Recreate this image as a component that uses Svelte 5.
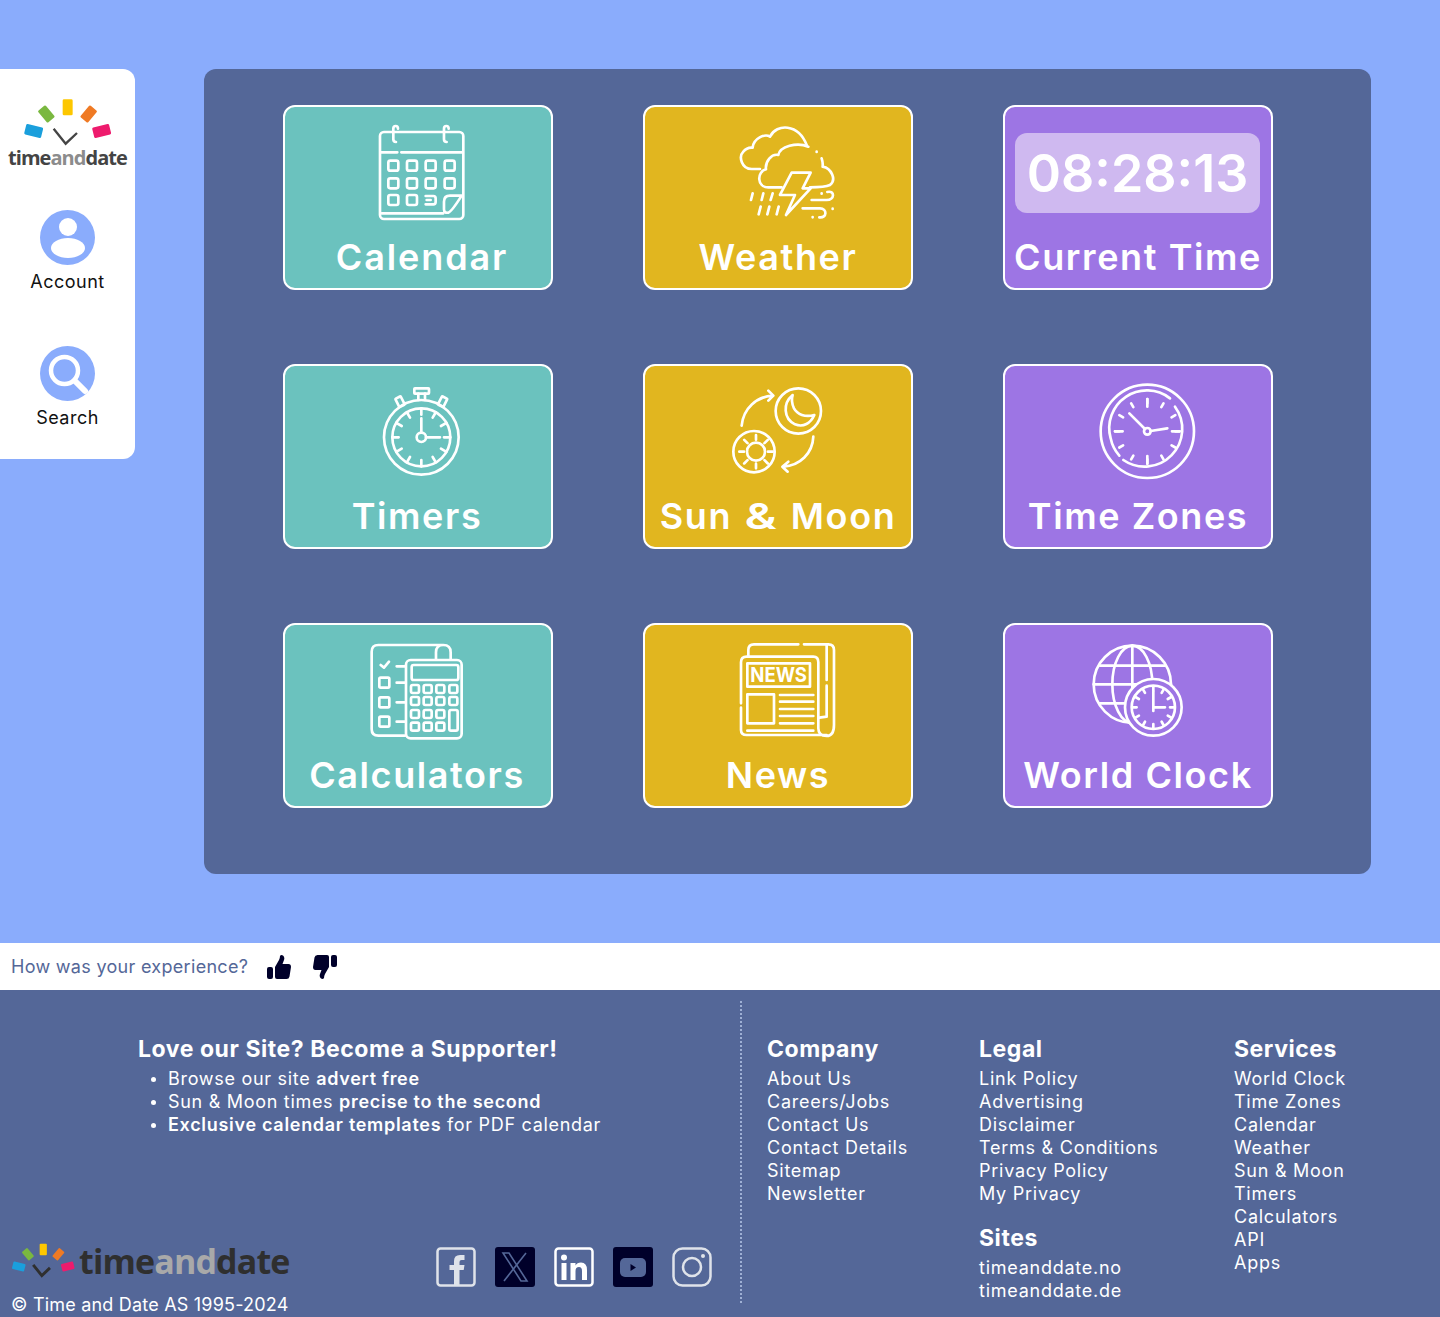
<script>
  const company = ["About Us", "Careers/Jobs", "Contact Us", "Contact Details", "Sitemap", "Newsletter"];
  const legal = ["Link Policy", "Advertising", "Disclaimer", "Terms & Conditions", "Privacy Policy", "My Privacy"];
  const sites = ["timeanddate.no", "timeanddate.de"];
  const services = ["World Clock", "Time Zones", "Calendar", "Weather", "Sun & Moon", "Timers", "Calculators", "API", "Apps"];

  // radial clock marks, returned as path data
  function ticks(cx, cy, r1, r2, n = 12) {
    let d = "";
    for (let i = 0; i < n; i++) {
      const a = (i * 2 * Math.PI) / n;
      const s = Math.sin(a), c = Math.cos(a);
      d += `M${(cx + r1 * s).toFixed(1)},${(cy - r1 * c).toFixed(1)}L${(cx + r2 * s).toFixed(1)},${(cy - r2 * c).toFixed(1)}`;
    }
    return d;
  }

  const calX = [340, 396, 452, 509];
  const calY = [197, 250];
  const keyX = [165, 203, 241, 280];
</script>

{#snippet logoMarks()}
  <rect x="189" y="117" width="30" height="48" rx="4" fill="#fdc700" />
  <rect x="125" y="138" width="30" height="46" rx="4" fill="#7ab840" transform="rotate(-40 140 161)" />
  <rect x="252" y="138" width="30" height="46" rx="4" fill="#ef7a24" transform="rotate(40 267 161)" />
  <rect x="76" y="196" width="52" height="32" rx="4" fill="#1a9fdc" transform="rotate(14 102 212)" />
  <rect x="280" y="196" width="52" height="32" rx="4" fill="#ee1b6d" transform="rotate(-14 306 212)" />
{/snippet}

{#snippet thumb()}
  <path d="M0,14 Q0,12 2,12 H4 Q6,12 6,14 V22 Q6,24 4,24 H2 Q0,24 0,22 Z M8,12 L12,5 Q13,3 13,1 Q14,-.5 16,.5 Q18,2 17,5 L15.5,9 H21.5 Q24,9 24,12 L22.5,21.5 Q22,24 19.5,24 H10 Q8,24 8,22 Z" />
{/snippet}

<div class="hero">
  <aside class="side">
    <div class="side-logo">
      <svg viewBox="70 110 270 150" width="90" height="50">
        {@render logoMarks()}
        <path d="M162,205 L198,250 L232,218" fill="none" stroke="#444" stroke-width="7" />
      </svg>
      <div class="wordmark">time<span>and</span>date</div>
    </div>
    <div class="side-item account">
      <svg viewBox="0 0 55 55" width="55" height="55">
        <circle cx="27.5" cy="27.5" r="27.5" fill="#8aacfc" />
        <circle cx="28" cy="17" r="9" fill="#fff" />
        <ellipse cx="28" cy="38" rx="17" ry="10" fill="#fff" />
      </svg>
      <span>Account</span>
    </div>
    <div class="side-item">
      <svg viewBox="0 0 55 55" width="55" height="55">
        <circle cx="27.5" cy="27.5" r="27.5" fill="#8aacfc" />
        <circle cx="24.5" cy="24.5" r="13.5" fill="none" stroke="#fff" stroke-width="4.5" />
        <path d="M35,35 L45,45" stroke="#fff" stroke-width="6" stroke-linecap="round" />
      </svg>
      <span>Search</span>
    </div>
  </aside>

  <main class="panel">
    <div class="card teal">
      <svg class="ico" viewBox="2 2 266 120">
        <g transform="translate(-3,-5) scale(.3333)">
          <rect x="300" y="96" width="250" height="261" rx="12" />
          <path d="M302,157 H352 M364,157 H548 M305,340 H490 M340,92 V86 Q340,78 347,78 Q354,78 354,86 M340,92 V118 Q340,126 348,126 M492,92 V86 Q492,78 499,78 Q506,78 506,86 M492,92 V118 Q492,126 500,126" />
          {#each calY as y}
            {#each calX as x}
              <rect x={x - 15} y={y - 15} width="30" height="30" rx="6" />
            {/each}
          {/each}
          <rect x="325" y="285" width="30" height="30" rx="6" />
          <rect x="381" y="285" width="30" height="30" rx="6" />
          <path d="M437,288 H460 Q467,288 467,295 V306 Q467,313 460,313 H437 M440,300 H452" />
          <path d="M545,287 H510 Q492,287 492,305 V328 Q492,340 505,338 Q515,335 545,287 Z" />
        </g>
      </svg>
      <div class="label shift">Calendar</div>
    </div>

    <div class="card gold">
      <svg class="ico" viewBox="2 2 266 120">
        <g transform="translate(-3,-5) scale(.3333)">
          <path d="M360,207 H335 C305,207 295,170 310,155 C318,145 330,142 338,143 C340,115 375,100 390,110 C410,70 475,70 500,135" />
          <path d="M505,140 C470,125 420,140 415,165 C395,160 375,185 378,208 C350,215 350,262 385,262 H425 M545,175 C550,190 548,195 548,200 C575,205 590,240 570,255 Q555,262 510,262" />
          <path d="M455,218 H512 L488,265 H512 L438,345 L465,285 H420 Z" />
          <path d="M338,280 L333,300 M370,280 L365,300 M398,280 L392,300 M362,320 L356,343 M388,320 L382,343 M416,320 L410,343" />
          <path d="M515,300 H560 C585,300 585,270 562,276 M488,325 H540 C562,325 562,355 538,352 M530,155 V156 M578,326 V327 M518,351 V352 M545,280 V281" />
        </g>
      </svg>
      <div class="label">Weather</div>
    </div>

    <div class="card purple">
      <div class="time">08:28:13</div>
      <div class="label">Current Time</div>
    </div>

    <div class="card teal">
      <svg class="ico" viewBox="2 2 266 120">
        <g transform="translate(77,11) scale(.3333)">
          <circle cx="184" cy="187" r="112" />
          <circle cx="184" cy="187" r="87" />
          <circle cx="184" cy="187" r="14" />
          <path d="M184,130 V172 M198,187 H240" />
          <path d={ticks(184, 187, 87, 68)} />
          <rect x="163" y="40" width="44" height="16" rx="2" />
          <path d="M175,56 V75 M195,56 V75" />
          <rect x="111" y="66" width="18" height="28" rx="2" transform="rotate(-27 120 80)" />
          <rect x="239" y="66" width="18" height="28" rx="2" transform="rotate(27 248 80)" />
        </g>
      </svg>
      <div class="label left">Timers</div>
    </div>

    <div class="card gold">
      <svg class="ico" viewBox="2 2 266 120">
        <g transform="translate(77,11) scale(.3333)">
          <circle cx="235" cy="108" r="68" />
          <path d="M218,60 C188,85 190,130 225,148 C250,158 272,145 283,120 C255,128 232,118 222,100 C215,85 214,72 218,60 Z" />
          <circle cx="102" cy="230" r="62" />
          <circle cx="108" cy="230" r="27" />
          <path d={ticks(108, 230, 36, 50, 8)} />
          <path d="M65,152 C70,100 110,65 158,62 M145,47 L160,62 L145,77" />
          <path d="M280,185 C278,235 240,272 190,275 M205,260 L187,275 L203,290" />
        </g>
      </svg>
      <div class="label">Sun <span class="and">&amp;</span> Moon</div>
    </div>

    <div class="card purple">
      <svg class="ico" viewBox="2 2 266 120">
        <g transform="translate(87,11) scale(.3333)">
          <circle cx="172" cy="169" r="140" />
          <path d="M240,70 A113,113 0 0 0 62,190 Q68,220 88,242 M100,255 A113,113 0 0 0 255,95" />
          <circle cx="172" cy="169" r="10" />
          <path d="M118,115 L165,162 M182,168 L232,160" />
          <path d={ticks(172, 169, 97, 84)} />
          <path d="M172,72 V95 M172,243 V266 M75,169 H98 M246,169 H269" />
        </g>
      </svg>
      <div class="label">Time Zones</div>
    </div>

    <div class="card teal">
      <svg class="ico" viewBox="2 2 266 120">
        <g transform="translate(77,12) scale(.3333)">
          <path d="M135,302 H55 Q35,302 35,282 V50 Q35,30 55,30 H250 Q272,30 272,52 V72 M228,72 V52 Q228,30 250,30" />
          <path d="M62,90 L72,98 L87,80 M110,94 H135 M110,143 H135 M110,202 H135 M110,260 H135" />
          <rect x="58" y="128" width="30" height="30" rx="4" />
          <rect x="58" y="187" width="30" height="30" rx="4" />
          <rect x="58" y="245" width="30" height="30" rx="4" />
          <rect x="138" y="75" width="167" height="235" rx="14" />
          <rect x="155" y="90" width="140" height="45" rx="6" />
          {#each keyX as x}
            <rect x={x - 12} y="150" width="24" height="24" rx="5" />
            <rect x={x - 12} y="186" width="24" height="24" rx="5" />
          {/each}
          {#each keyX.slice(0, 3) as x}
            <rect x={x - 12} y="225" width="24" height="24" rx="5" />
            <rect x={x - 12} y="263" width="24" height="24" rx="5" />
          {/each}
          <rect x="268" y="225" width="25" height="62" rx="5" />
        </g>
      </svg>
      <div class="label left">Calculators</div>
    </div>

    <div class="card gold">
      <svg class="ico" viewBox="2 2 266 120">
        <g transform="translate(87,12) scale(.3333)">
          <path d="M33,205 V82 Q33,65 50,65 H250 Q265,65 265,82 V280 Q265,303 290,303 Q312,303 312,270 V45 Q312,28 295,28 H222 M205,28 H72 Q55,28 55,45 V65 M33,218 V285 Q33,300 50,300 H290" />
          <path d="M290,28 Q290,45 290,135 M290,152 V245 L268,248" />
          <rect x="52" y="85" width="188" height="70" />
          <rect x="52" y="178" width="80" height="87" />
          <path d="M150,180 H250 M150,200 H250 M150,222 H250 M150,243 H250 M150,265 H250 M52,287 H250" />
          <text class="news" x="146" y="140" text-anchor="middle" textLength="170" lengthAdjust="spacingAndGlyphs">NEWS</text>
        </g>
      </svg>
      <div class="label">News</div>
    </div>

    <div class="card purple">
      <svg class="ico" viewBox="2 2 266 120">
        <g transform="translate(82,12) scale(.3333)">
          <circle cx="142" cy="148" r="116" />
          <ellipse cx="142" cy="148" rx="60" ry="116" />
          <path d="M142,32 V264 M45,92 H239 M26,148 H258 M45,205 H239" />
          <circle cx="205" cy="217" r="85" class="cover" />
          <circle cx="205" cy="217" r="65" />
          <path d="M205,170 V228 M205,217 H240" />
          <path d={ticks(205, 217, 62, 50)} />
        </g>
      </svg>
      <div class="label">World Clock</div>
    </div>
  </main>
</div>

<div class="feedback">
  <span>How was your experience?</span>
  <svg viewBox="0 0 24 24" width="24" height="24" class="up">{@render thumb()}</svg>
  <svg viewBox="0 0 24 24" width="24" height="24" class="down">{@render thumb()}</svg>
</div>

<footer>
  <div class="foot-left">
    <div class="support">
      <h3>Love our Site? Become a Supporter!</h3>
      <ul>
        <li>Browse our site <b>advert free</b></li>
        <li>Sun &amp; Moon times <b>precise to the second</b></li>
        <li><b>Exclusive calendar templates</b> for PDF calendar</li>
      </ul>
    </div>
    <div class="foot-bottom">
      <div class="brand">
        <div class="brand-logo">
          <svg viewBox="70 110 270 150" width="65" height="36">
            {@render logoMarks()}
            <path d="M162,205 L198,250 L232,218" fill="none" stroke="#2f2f2f" stroke-width="12" />
          </svg>
          <div class="wordmark big">time<span>and</span>date</div>
        </div>
        <div class="copy">© Time and Date AS 1995-2024</div>
      </div>
      <div class="social">
        <svg viewBox="0 0 40 40" width="40" height="40">
          <rect x="1.5" y="1.5" width="37" height="37" rx="3" fill="none" stroke="#dfe3ea" stroke-width="2.5" />
          <path d="M18,38 V23 H13.5 V18 H18 V14 Q18,8 24,8 H28.5 V13 H25.5 Q23.5,13 23.5,15 V18 H28.5 L27.7,23 H23.5 V38 Z" fill="#dfe3ea" />
        </svg>
        <svg viewBox="0 0 40 40" width="40" height="40">
          <rect width="40" height="40" rx="3" fill="#00002a" />
          <path d="M8,6 H14 L32,34 H26 Z M31,6 L9,34" fill="none" stroke="#546798" stroke-width="1.6" />
        </svg>
        <svg viewBox="0 0 40 40" width="40" height="40">
          <rect x="1.5" y="1.5" width="37" height="37" rx="3" fill="none" stroke="#fff" stroke-width="2.5" />
          <circle cx="10" cy="10.5" r="3" fill="#fff" />
          <path d="M7.5,16 H12.5 V33 H7.5 Z M16.5,16 H21.5 V18.5 Q23,15.5 27,15.5 Q33,15.5 33,23 V33 H28 V24 Q28,20 25,20 Q21.5,20 21.5,24 V33 H16.5 Z" fill="#fff" />
        </svg>
        <svg viewBox="0 0 40 40" width="40" height="40">
          <rect width="40" height="40" rx="3" fill="#00002a" />
          <rect x="7" y="11" width="26" height="19" rx="5" fill="#546798" />
          <path d="M17.5,17 L23,20.5 L17.5,24 Z" fill="#00002a" />
        </svg>
        <svg viewBox="0 0 40 40" width="40" height="40">
          <rect x="1.5" y="1.5" width="37" height="37" rx="9" fill="none" stroke="#dfe3ea" stroke-width="2.5" />
          <circle cx="20" cy="20" r="9" fill="none" stroke="#dfe3ea" stroke-width="2.5" />
          <circle cx="31" cy="9" r="2" fill="#dfe3ea" />
        </svg>
      </div>
    </div>
  </div>

  <div class="foot-links">
    <div class="col">
      <h4>Company</h4>
      {#each company as item}<a href="#top">{item}</a>{/each}
    </div>
    <div class="col">
      <h4>Legal</h4>
      {#each legal as item}<a href="#top">{item}</a>{/each}
      <h4 class="sites">Sites</h4>
      {#each sites as item}<a href="#top">{item}</a>{/each}
    </div>
    <div class="col">
      <h4>Services</h4>
      {#each services as item}<a href="#top">{item}</a>{/each}
    </div>
  </div>
</footer>

<style>
  :global(body) {
    font-family: Inter, "Noto Sans", sans-serif;
  }

  .hero {
    display: flex;
    align-items: flex-start;
    height: 943px;
    padding-top: 69px;
    box-sizing: border-box;
    background: #8aacfc;
  }

  .side {
    width: 135px;
    height: 390px;
    flex: none;
    box-sizing: border-box;
    padding-top: 28px;
    display: flex;
    flex-direction: column;
    align-items: center;
    background: #fff;
    border-radius: 0 12px 12px 0;
  }

  .side-logo {
    display: flex;
    flex-direction: column;
    align-items: center;
    height: 113px;
  }

  .side-logo svg {
    display: block;
    margin: 0 0 3px 2px;
  }

  .wordmark {
    font-family: "Open Sans", sans-serif;
    font-size: 20px;
    line-height: 16px;
    font-weight: 700;
    letter-spacing: -0.95px;
    color: #444;
  }

  .wordmark span {
    color: #8c8c8c;
  }

  .wordmark.big {
    font-size: 34px;
    line-height: 36px;
    letter-spacing: -0.85px;
    color: #2f2f2f;
    position: relative;
    top: 1px;
  }

  .wordmark.big span {
    color: #a9a9a9;
  }

  .side-item {
    display: flex;
    flex-direction: column;
    align-items: center;
    gap: 3px;
    font-size: 18px;
    letter-spacing: 0.5px;
    color: #111;
  }

  .side-item span {
    line-height: 27px;
  }

  .side-item.account {
    height: 136px;
  }

  .panel {
    width: 1167px;
    height: 805px;
    margin-left: 69px;
    box-sizing: border-box;
    padding: 36px 0 0 79px;
    display: grid;
    grid-template-columns: repeat(3, 270px);
    grid-auto-rows: 185px;
    column-gap: 90px;
    row-gap: 74px;
    background: #546798;
    border-radius: 12px;
  }

  .card {
    box-sizing: border-box;
    border: 2px solid #fff;
    border-radius: 12px;
    display: flex;
    flex-direction: column;
    align-items: center;
    color: #fff;
  }

  .teal {
    background: #6bc2be;
  }

  .gold {
    background: #e1b61f;
  }

  .purple {
    background: #9d75e4;
  }

  .ico {
    display: block;
    width: 266px;
    height: 120px;
    flex: none;
    fill: none;
    stroke: #fff;
    stroke-width: 8;
    stroke-linecap: round;
    stroke-linejoin: round;
  }

  .cover {
    fill: #9d75e4;
  }

  .news {
    font-size: 62px;
    font-weight: 700;
    fill: #fff;
    stroke: none;
  }

  .label {
    font-size: 36px;
    line-height: 44px;
    margin-top: 8px;
    font-weight: 600;
    letter-spacing: 1.6px;
    white-space: nowrap;
  }

  .label.shift {
    letter-spacing: 1.9px;
    transform: translateX(4px);
  }

  .label.left {
    transform: translateX(-1px);
  }

  .and {
    display: inline-block;
    margin: 0 6px;
    transform: scaleX(1.35);
  }

  .time {
    width: 245px;
    height: 80px;
    flex: none;
    margin: 26px 1px 14px 0;
    display: flex;
    align-items: center;
    justify-content: center;
    background: #cfb9f0;
    border-radius: 12px;
    font-size: 52px;
    font-weight: 600;
  }

  .feedback {
    height: 47px;
    box-sizing: border-box;
    padding-left: 11px;
    display: flex;
    align-items: center;
    font-size: 18px;
    letter-spacing: 0.3px;
    color: #546798;
    background: #fff;
  }

  .feedback svg {
    fill: #00002a;
  }

  .up {
    margin-left: 19px;
  }

  .down {
    margin-left: 22px;
    transform: rotate(180deg);
  }

  footer {
    height: 327px;
    box-sizing: border-box;
    padding-top: 11px;
    display: flex;
    color: #fff;
    background: #546798;
  }

  .foot-left {
    width: 740px;
    height: 302px;
    flex: none;
    display: flex;
    flex-direction: column;
    justify-content: space-between;
  }

  .support {
    padding: 35px 0 0 138px;
  }

  h3, h4 {
    margin: 0;
    font-size: 23px;
    line-height: 27px;
    font-weight: 700;
    letter-spacing: 0.55px;
  }

  ul {
    margin: 4px 0 0;
    padding: 0 0 0 30px;
  }

  li {
    font-size: 18px;
    line-height: 23px;
    letter-spacing: 0.7px;
  }

  li::marker {
    font-size: 15px;
  }

  b {
    font-weight: 600;
  }

  .foot-bottom {
    display: flex;
    align-items: flex-start;
    height: 75px;
    margin-bottom: -14px;
  }

  .brand {
    width: 436px;
    padding-left: 11px;
    box-sizing: border-box;
  }

  .brand-logo {
    display: flex;
    align-items: center;
    gap: 3px;
  }

  .copy {
    margin-top: 15px;
    font-size: 18px;
    line-height: 23px;
    white-space: nowrap;
    letter-spacing: 0.2px;
  }

  .social {
    display: flex;
    gap: 19px;
    margin-top: 5px;
  }

  .social svg {
    display: block;
  }

  .foot-links {
    flex: 1;
    height: 302px;
    box-sizing: border-box;
    border-left: 2px dotted #9fb0d4;
    padding: 35px 0 0 25px;
    display: grid;
    grid-template-columns: 212px 255px 1fr;
  }

  .col {
    display: flex;
    flex-direction: column;
    align-items: flex-start;
  }

  .col h4 {
    margin-bottom: 4px;
  }

  .col .sites {
    margin: 20px 0 4px;
  }

  .col a {
    font-size: 18px;
    line-height: 23px;
    letter-spacing: 0.75px;
    color: #fff;
    text-decoration: none;
  }
</style>
